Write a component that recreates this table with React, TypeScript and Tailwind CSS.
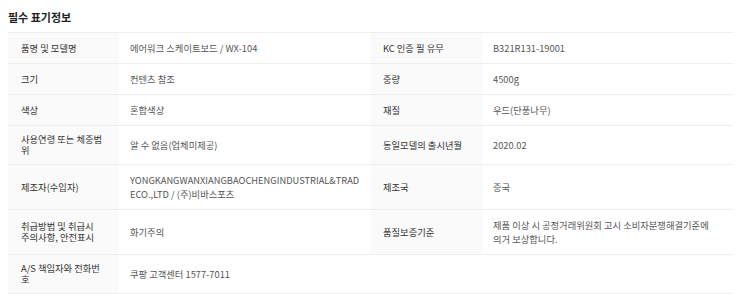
const rows: [string, string, string, string][] = [
  ['품명 및 모델명', '에어워크 스케이트보드 / WX-104', 'KC 인증 필 유무', 'B321R131-19001'],
  ['크기', '컨텐츠 참조', '중량', '4500g'],
  ['색상', '혼합색상', '재질', '우드(단풍나무)'],
  ['사용연령 또는 체중범\n위', '알 수 없음(업체미제공)', '동일모델의 출시년월', '2020.02'],
  ['제조자(수입자)', 'YONGKANGWANXIANGBAOCHENGINDUSTRIAL&TRAD\nECO.,LTD / (주)비바스포츠', '제조국', '중국'],
  ['취급방법 및 취급시\n주의사항, 안전표시', '화기주의', '품질보증기준', '제품 이상 시 공정거래위원회 고시 소비자분쟁해결기준에\n의거 보상합니다.'],
  ['A/S 책임자와 전화번\n호', '쿠팡 고객센터 1577-7011', '', ''],
];

function Label({ text }: { text: string }) {
  return (
    <td className={`px-[13px] py-[8px] align-middle text-[9.3px] leading-[11px] text-[#333] whitespace-pre-line ${text ? 'bg-[#fafafa]' : ''}`}>
      {text}
    </td>
  );
}

function Value({ text }: { text: string }) {
  return (
    <td className="px-[11px] py-[8px] align-middle text-[9.3px] leading-[14px] text-[#555] whitespace-pre-line">
      {text}
    </td>
  );
}

export default function App() {
  return (
    <div className="w-[740px] h-[294px] bg-white font-['Noto_Sans_CJK_KR',sans-serif] pt-[11px]">
      <h2 className="pl-[8px] text-[11px] leading-[12px] font-bold text-[#222]">필수 표기정보</h2>
      <table className="ml-[8px] mt-[9px] w-[725px] table-fixed border-collapse border-t border-[#eee]">
        <colgroup>
          <col className="w-[111px]" />
          <col className="w-[251px]" />
          <col className="w-[112px]" />
          <col className="w-[251px]" />
        </colgroup>
        <tbody>
          {rows.map((r, i) => (
            <tr key={i} className="border-b border-[#eee]">
              <Label text={r[0]} />
              <Value text={r[1]} />
              <Label text={r[2]} />
              <Value text={r[3]} />
            </tr>
          ))}
        </tbody>
      </table>
    </div>
  );
}
